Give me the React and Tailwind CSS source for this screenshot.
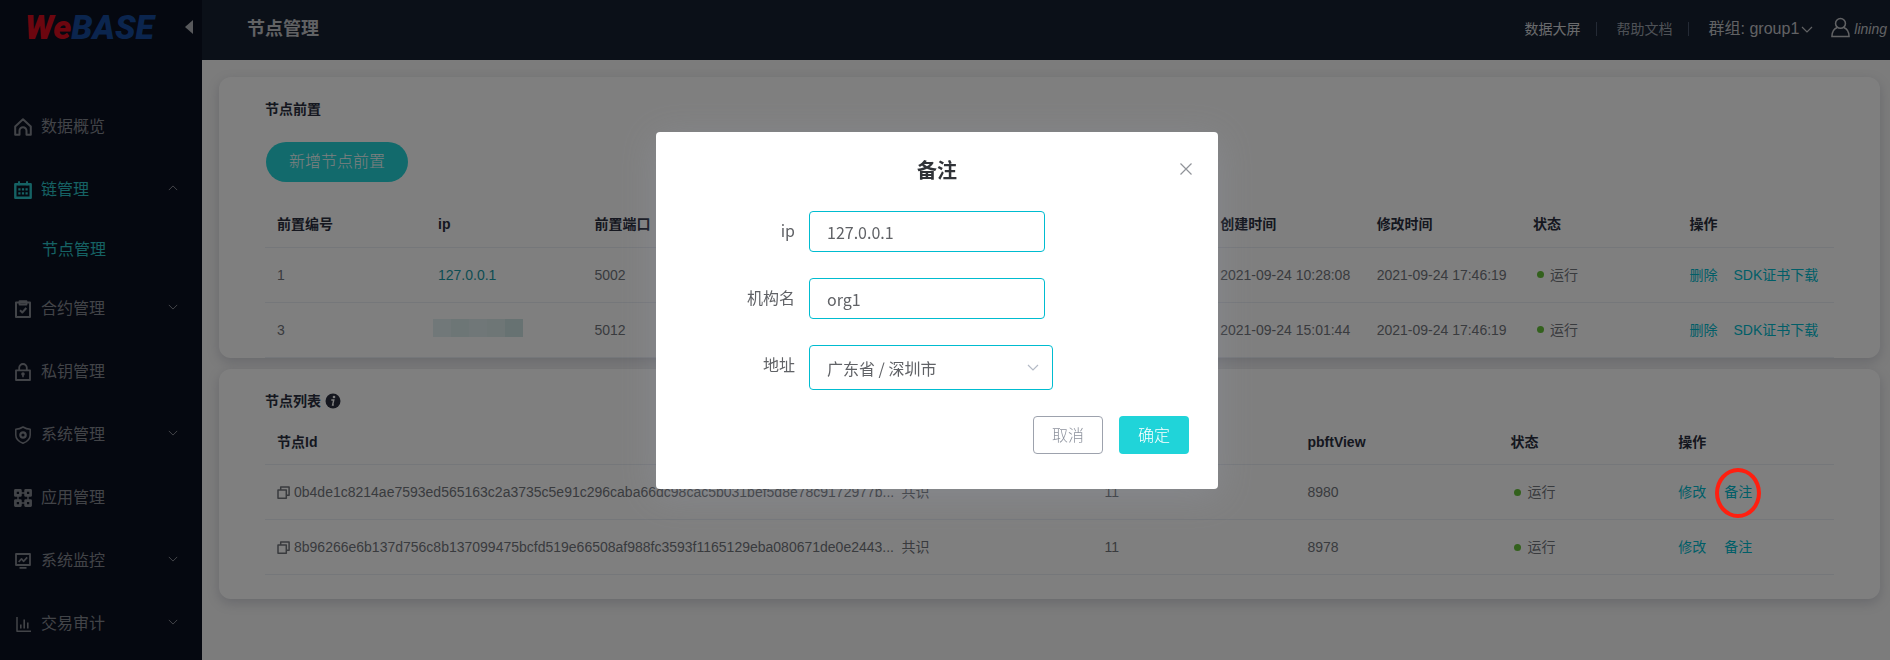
import React from "react";

const FONT = "font-['Liberation_Sans','Noto_Sans_CJK_SC',sans-serif]";

function Icon({ children, className = "size-[18px]" }) {
  return (
    <svg viewBox="0 0 18 18" className={className} fill="none" stroke="currentColor" strokeWidth="1.8" strokeLinejoin="round" aria-hidden="true">
      {children}
    </svg>
  );
}

const icons = {
  home: (
    <Icon>
      <path d="M1.200 8.500 9 1.300l7.800 7.200V16.800h-4.300v-4a3.500 3.500 0 0 0-7 0v4H1.200z" strokeWidth="2" />
    </Icon>
  ),
  chain: (
    <Icon>
      <path d="M1.300 3.200h15.400v13.500H1.300z" strokeWidth="2.400" />
      <path d="M5 .3v4M13 .3v4" strokeWidth="2" />
      <path d="M4.300 8.300h2.200M7.900 8.300h2.200M11.500 8.300h2.200M4.300 12.300h2.200M7.900 12.300h2.200M11.500 12.300h2.200" strokeWidth="2.200" />
    </Icon>
  ),
  contract: (
    <Icon>
      <path d="M2 2.600h14V17H2z" strokeWidth="2" />
      <path d="M5.500 1.200h7v3.300h-7z" />
      <path d="m6 10.300 2.300 2.200 4-4.500" strokeWidth="2" />
    </Icon>
  ),
  lock: (
    <Icon>
      <path d="M2 7.300h14V17H2z" />
      <path d="M5.200 7V4.800a3.800 3.800 0 0 1 7.600 0V7" />
      <path d="M9 10v4.300" strokeWidth="1.600" />
      <circle cx="9" cy="11" r=".9" />
    </Icon>
  ),
  shield: (
    <Icon>
      <path d="M9 1c2.500 1.600 4.800 2.200 7.200 2.300V9c0 4-2.800 6.600-7.200 8.300C4.600 15.600 1.800 13 1.800 9V3.300C4.200 3.200 6.500 2.600 9 1z" strokeWidth="1.500" />
      <circle cx="9" cy="9" r="2.700" strokeWidth="2.200" />
    </Icon>
  ),
  apps: (
    <Icon>
      <path d="M1.400 1.400h5v5h-5zM11.600 1.400h5v5h-5zM1.400 11.600h5v5h-5zM11.600 11.600h5v5h-5z" strokeWidth="2.700" />
      <path d="M7 4h4M7 14h4M4 7v4M14 7v4" strokeWidth="1.400" />
    </Icon>
  ),
  monitor: (
    <Icon>
      <path d="M2 2h14v11H2zM5.500 15.800h7" strokeWidth="1.800" />
      <path d="m4.700 10 2.800-3.200 2 2.500 3.700-4" strokeWidth="1.700" />
    </Icon>
  ),
  audit: (
    <Icon>
      <path d="M3 2v14.200h14" strokeWidth="1.500" />
      <path d="M6.800 13.500V9.500M10.200 13.500V4.500M13.800 13.500V7.500" strokeWidth="1.600" />
    </Icon>
  ),
};

function Chevron({ up = false, className = "h-[7px] w-3" }) {
  return (
    <svg viewBox="0 0 12 7" className={className} fill="none" stroke="currentColor" strokeWidth="1.200" aria-hidden="true">
      <path d={up ? "M1 6l5-5 5 5" : "M1 1l5 5 5-5"} />
    </svg>
  );
}

const nav = [
  { label: "数据概览", icon: "home" },
  { label: "链管理", icon: "chain", active: true, open: true, arrow: true, children: ["节点管理"] },
  { label: "合约管理", icon: "contract", arrow: true },
  { label: "私钥管理", icon: "lock" },
  { label: "系统管理", icon: "shield", arrow: true },
  { label: "应用管理", icon: "apps" },
  { label: "系统监控", icon: "monitor", arrow: true },
  { label: "交易审计", icon: "audit", arrow: true },
];

function Sidebar() {
  return (
    <aside className="w-[202px] shrink-0 bg-[#0b1020] text-[#858891]">
      <div className="flex h-[95px] items-start justify-between pt-1 pr-[9px] pl-[25px]">
        <div className="font-['Roboto',sans-serif] text-[34px] leading-[46px] font-black italic" aria-label="WeBASE">
          <span className="text-[#d90d1f]">We</span>
          <span className="text-[#164a9c]">BASE</span>
        </div>
        <button type="button" aria-label="收起菜单" className="mt-4 text-[#b0b3b8]">
          <svg viewBox="0 0 8 14" className="h-[14px] w-2" fill="currentColor">
            <path d="M8 0v14L0 7z" />
          </svg>
        </button>
      </div>
      <nav>
        <ul>
          {nav.map((item) => (
            <li key={item.label}>
              <a href="#" className={`flex h-[63px] items-center pr-6 pl-[14px] text-base ${item.active ? "text-[#2bc4c8]" : ""}`}>
                {icons[item.icon]}
                <span className="ml-[9px] flex-1">{item.label}</span>
                {item.arrow && (
                  <span className="pb-1 text-[#858891]">
                    <Chevron up={item.open} className="h-[6px] w-[10px]" />
                  </span>
                )}
              </a>
              {item.children?.map((c) => (
                <a key={c} href="#" className="flex h-[56px] items-center pt-[2px] pl-[42px] text-base text-[#2bc4c8]">
                  {c}
                </a>
              ))}
            </li>
          ))}
        </ul>
      </nav>
    </aside>
  );
}

function Header() {
  return (
    <header className="flex h-[60px] items-center justify-between bg-[#172030] pr-[3px] pb-[2px] pl-[45px] text-[#c3c5c9]">
      <h1 className="text-lg font-bold">节点管理</h1>
      <div className="flex items-center">
        <a href="#" className="text-sm text-[#d5d7da]">数据大屏</a>
        <span className="mx-[15px] h-[14px] w-px bg-[#48556a]" />
        <a href="#" className="ml-[5px] text-sm text-[#9da3ad]">帮助文档</a>
        <span className="mx-[15px] h-[14px] w-px bg-[#48556a]" />
        <button type="button" className="ml-[5px] flex items-center gap-[2px] text-base">
          群组: group1
          <Chevron className="h-[7px] w-3" />
        </button>
        <a href="#" className="ml-[18px] flex items-center gap-1 text-sm italic">
          <svg viewBox="0 0 20 21" className="mb-1 h-[21px] w-[19px]" fill="none" stroke="currentColor" strokeWidth="1.600" aria-hidden="true">
            <circle cx="10" cy="6.200" r="5.200" />
            <path d="M6.500 10.500C3 12 1 15 1 20h18c0-5-2-8-5.500-9.500" />
          </svg>
          lining
        </a>
      </div>
    </header>
  );
}

function Status() {
  return (
    <span className="flex items-center gap-[6px] pl-1">
      <span className="size-[7px] rounded-full bg-[#67c23a]" />
      运行
    </span>
  );
}

const th = "h-[47px] border-b border-[#ebeef5] pt-[2px] pl-3 text-left font-bold text-[#2b2f3f]";
const td = "h-[55px] border-b border-[#ebeef5] pl-3 text-[#73767c] whitespace-nowrap";
const card = "rounded-xl bg-white px-[46px] shadow-[0_4px_12px_0_rgba(118,123,145,0.3)]";
const action = "text-sm text-[#00bcd0]";

const fronts = [
  { id: 1, ip: "127.0.0.1", port: 5002, created: "2021-09-24 10:28:08", updated: "2021-09-24 17:46:19" },
  { id: 3, ip: null, port: 5012, created: "2021-09-24 15:01:44", updated: "2021-09-24 17:46:19" },
];

function MaskedIp() {
  return (
    <span className="-ml-[5px] mb-1 flex h-[18px] w-[90px]" role="img" aria-label="已隐藏">
      <span className="flex-1 bg-[#e2f1f2]" />
      <span className="flex-1 bg-[#daeced]" />
      <span className="flex-1 bg-[#e0eff0]" />
      <span className="flex-1 bg-[#dcecec]" />
      <span className="flex-1 bg-[#cee4e4]" />
    </span>
  );
}

function FrontCard() {
  return (
    <section className={card}>
      <h2 className="pt-[22px] text-sm leading-5 font-bold text-[#2b2f3f]">节点前置</h2>
      <button type="button" className="mt-[23px] ml-px h-10 rounded-full bg-[#24d5d8] px-[23px] text-base font-light text-white">
        新增节点前置
      </button>
      <table className="mt-[18px] w-full table-fixed text-sm">
        <thead>
          <tr>
            <th className={`${th} w-[161px]`}>前置编号</th>
            <th className={th}>ip</th>
            <th className={th}>前置端口</th>
            <th className={th} colSpan={3}></th>
            <th className={th}>创建时间</th>
            <th className={th}>修改时间</th>
            <th className={th}>状态</th>
            <th className={th}>操作</th>
          </tr>
        </thead>
        <tbody>
          {fronts.map((r) => (
            <tr key={r.id}>
              <td className={td}>{r.id}</td>
              <td className={td}>{r.ip ? <a href="#" className="text-[#1a9aa6]">{r.ip}</a> : <MaskedIp />}</td>
              <td className={td}>{r.port}</td>
              <td className={td} colSpan={3}></td>
              <td className={td}>{r.created}</td>
              <td className={td}>{r.updated}</td>
              <td className={td}><Status /></td>
              <td className={td}>
                <span className="flex gap-4">
                  <button type="button" className={action}>删除</button>
                  <button type="button" className={action}>SDK证书下载</button>
                </span>
              </td>
            </tr>
          ))}
        </tbody>
      </table>
    </section>
  );
}

const nodes = [
  { id: "0b4de1c8214ae7593ed565163c2a3735c5e91c296caba66dc98cac5b031bef5d8e78c9172977b...", block: 11, view: 8980, marked: true },
  { id: "8b96266e6b137d756c8b137099475bcfd519e66508af988fc3593f1165129eba080671de0e2443...", block: 11, view: 8978 },
];

function NodeCard() {
  return (
    <section className={`${card} mt-[11px] pb-6`}>
      <h2 className="flex items-center gap-1 pt-[22px] text-sm leading-5 font-bold text-[#2b2f3f]">
        节点列表
        <svg viewBox="0 0 16 16" className="size-4" aria-hidden="true">
          <circle cx="8" cy="8" r="7.500" fill="#2b2f3f" />
          <circle cx="9" cy="4" r="1.300" fill="#fff" />
          <path d="M6.300 7h2.500l-1.200 5h1.200" fill="none" stroke="#fff" strokeWidth="1.400" />
        </svg>
      </h2>
      <table className="mt-[7px] w-full table-fixed text-sm">
        <thead>
          <tr>
            <th className={`${th} w-[39.8%]`}>节点Id</th>
            <th className={`${th} w-[203px]`}></th>
            <th className={`${th} w-[203px]`}></th>
            <th className={`${th} w-[203px]`}>pbftView</th>
            <th className={th}>状态</th>
            <th className={th}>操作</th>
          </tr>
        </thead>
        <tbody>
          {nodes.map((n) => (
            <tr key={n.id}>
              <td className={td}>
                <span className="flex items-center gap-1">
                  <svg viewBox="0 0 13 13" className="size-[13px] shrink-0" fill="none" stroke="currentColor" strokeWidth="1.500" strokeLinejoin="round" aria-hidden="true">
                    <path d="M1 4h8.300v8.200H1zM3.700 4V1h8.400v8.200H9.300" />
                  </svg>
                  {n.id}
                </span>
              </td>
              <td className={td}>共识</td>
              <td className={td}>{n.block}</td>
              <td className={td}>{n.view}</td>
              <td className={td}><Status /></td>
              <td className={td}>
                <span className="flex gap-[18px]">
                  <button type="button" className={action}>修改</button>
                  <span className="relative flex">
                    <button type="button" className={action}>备注</button>
                    {n.marked && (
                      <span className="pointer-events-none absolute -top-[14px] -left-[9px] z-50 h-[50px] w-[46px] rounded-[50%] border-4 border-[#ff1f10]" />
                    )}
                  </span>
                </span>
              </td>
            </tr>
          ))}
        </tbody>
      </table>
    </section>
  );
}

const input = "h-[41px] w-[236px] rounded border border-[#00bcd0] bg-white px-[17px] text-base text-[#606266] outline-none";
const label = "w-[139px] pr-[14px] text-right text-base leading-[38px] text-[#606266]";

function RemarkDialog() {
  return (
    <div className="fixed inset-0 z-40 flex items-start justify-center bg-black/50 pt-[132px]">
      <form
        role="dialog"
        aria-labelledby="dlg-title"
        className="relative ml-[-16px] w-[562px] rounded bg-white pb-[35px] font-['Noto_Sans_CJK_SC',sans-serif] shadow-[0_6px_36px_0_rgba(159,166,189,0.25)]"
      >
        <h2 id="dlg-title" className="pt-6 text-center text-xl leading-7 font-bold text-[#303338]">备注</h2>
        <button type="button" aria-label="关闭" className="absolute top-[31px] right-[26px] text-[#909399]">
          <svg viewBox="0 0 12 12" className="size-3" fill="none" stroke="currentColor" strokeWidth="1.200">
            <path d="M.5.5l11 11M11.500.5l-11 11" />
          </svg>
        </button>
        <div className="mt-[27px] flex flex-col gap-[26px] pl-[14px]">
          <div className="flex items-start">
            <label htmlFor="ip" className={label}>ip</label>
            <input id="ip" className={input} defaultValue="127.0.0.1" />
          </div>
          <div className="flex items-start">
            <label htmlFor="org" className={label}>机构名</label>
            <input id="org" className={input} defaultValue="org1" />
          </div>
          <div className="flex items-start">
            <label htmlFor="addr" className={label}>地址</label>
            <div className="relative">
              <select id="addr" className="h-[45px] w-[244px] appearance-none rounded border border-[#00bcd0] bg-white px-[17px] text-base text-[#606266] outline-none">
                <option>广东省 / 深圳市</option>
              </select>
              <span className="pointer-events-none absolute top-[19px] right-[14px] text-[#b4bac6]">
                <Chevron />
              </span>
            </div>
          </div>
        </div>
        <div className="mt-[26px] flex justify-end gap-4 pr-[29px]">
          <button type="button" className="h-[38px] w-[70px] rounded border border-[#9da2ad] bg-white pb-[2px] text-base font-light text-[#8d929d]">取消</button>
          <button type="submit" className="h-[38px] w-[70px] rounded bg-[#20d4d9] pb-[2px] text-base font-light text-white">确定</button>
        </div>
      </form>
    </div>
  );
}

export default function App() {
  return (
    <div className={`flex h-screen overflow-hidden bg-[#f8f8f8] ${FONT}`}>
      <Sidebar />
      <div className="min-w-0 flex-1">
        <Header />
        <main className="pt-[17px] pr-[10px] pl-[17px]">
          <FrontCard />
          <NodeCard />
        </main>
      </div>
      <RemarkDialog />
    </div>
  );
}
